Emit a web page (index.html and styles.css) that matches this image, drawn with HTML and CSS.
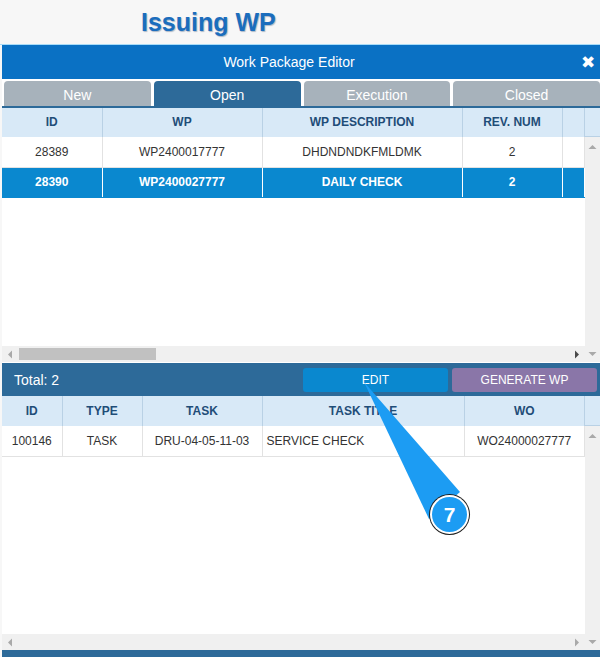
FILE: index.html
```html
<!DOCTYPE html>
<html>
<head>
<meta charset="utf-8">
<link rel="stylesheet" href="styles.css">
</head>
<body>
<div class="title-bar"><h1 class="title">Issuing WP</h1></div>
<div class="dialog">
  <div class="dlg-head"><span class="dlg-title">Work Package Editor</span><span class="close">✖</span></div>
  <div class="tabs">
    <div class="tab">New</div>
    <div class="tab active">Open</div>
    <div class="tab">Execution</div>
    <div class="tab">Closed</div>
  </div>

  <div class="grid">
    <div class="g-head">
      <table class="tbl">
        <colgroup><col class="c100"><col class="c160"><col class="c200"><col class="c100"><col></colgroup>
        <tr><th>ID</th><th>WP</th><th>WP DESCRIPTION</th><th>REV. NUM</th><th></th></tr>
      </table>
    </div>
    <div class="g-head-fill"></div>
    <div class="g-body">
      <table class="tbl">
        <colgroup><col class="c100"><col class="c160"><col class="c200"><col class="c100"><col></colgroup>
        <tr><td>28389</td><td>WP2400017777</td><td>DHDNDNDKFMLDMK</td><td>2</td><td></td></tr>
        <tr class="sel"><td>28390</td><td>WP2400027777</td><td>DAILY CHECK</td><td>2</td><td></td></tr>
      </table>
    </div>
    <div class="vscroll">
      <svg class="arr" width="9" height="6" viewBox="0 0 9 6"><path d="M0.5 5 L4.5 1 L8.5 5 Z" fill="#a9a9a9"/></svg>
      <svg class="arr" width="9" height="6" viewBox="0 0 9 6"><path d="M0.5 1 L4.5 5 L8.5 1 Z" fill="#a9a9a9"/></svg>
    </div>
    <div class="hscroll">
      <svg class="arr-l" width="6" height="9" viewBox="0 0 6 9"><path d="M5 0.5 L1 4.5 L5 8.5 Z" fill="#a9a9a9"/></svg>
      <div class="thumb"></div>
      <div class="spacer"></div>
      <svg class="arr-r" width="6" height="9" viewBox="0 0 6 9"><path d="M1 0.5 L5 4.5 L1 8.5 Z" fill="#4a4a4a"/></svg>
    </div>
  </div>

  <div class="total-bar">
    <span class="total">Total: 2</span>
    <div class="btn btn-edit">EDIT</div>
    <div class="btn btn-gen">GENERATE WP</div>
  </div>

  <div class="grid grid-bottom">
    <div class="g-head">
      <table class="tbl">
        <colgroup><col class="c60"><col class="c80"><col class="c120"><col class="c202"><col></colgroup>
        <tr><th>ID</th><th>TYPE</th><th>TASK</th><th>TASK TITLE</th><th>WO</th></tr>
      </table>
    </div>
    <div class="g-head-fill"></div>
    <div class="g-body">
      <table class="tbl">
        <colgroup><col class="c60"><col class="c80"><col class="c120"><col class="c202"><col></colgroup>
        <tr><td>100146</td><td>TASK</td><td>DRU-04-05-11-03</td><td class="left">SERVICE CHECK</td><td>WO24000027777</td></tr>
      </table>
    </div>
    <div class="vscroll">
      <svg class="arr" width="9" height="6" viewBox="0 0 9 6"><path d="M0.5 5 L4.5 1 L8.5 5 Z" fill="#a9a9a9"/></svg>
      <svg class="arr" width="9" height="6" viewBox="0 0 9 6"><path d="M0.5 1 L4.5 5 L8.5 1 Z" fill="#a9a9a9"/></svg>
    </div>
    <div class="hscroll">
      <svg class="arr-l" width="6" height="9" viewBox="0 0 6 9"><path d="M5 0.5 L1 4.5 L5 8.5 Z" fill="#a9a9a9"/></svg>
      <div class="spacer"></div>
      <svg class="arr-r" width="6" height="9" viewBox="0 0 6 9"><path d="M1 0.5 L5 4.5 L1 8.5 Z" fill="#a9a9a9"/></svg>
    </div>
  </div>
  <div class="footer-bar"></div>
</div>

<svg class="callout" width="600" height="657" viewBox="0 0 600 657">
  <polygon points="364,382 429,519 460,492" fill="#1c9cf3"/>
  <circle cx="449.5" cy="514.5" r="20.5" fill="#1e1e1e"/>
  <circle cx="449.5" cy="514.5" r="19.5" fill="#ffffff"/>
  <circle cx="449.5" cy="514.5" r="17.5" fill="#1c9cf3"/>
  <text x="449.5" y="522" text-anchor="middle" class="callout-num">7</text>
</svg>
</body>
</html>
```
FILE: styles.css
```css
* { box-sizing: border-box; }

body {
  margin: 0;
  width: 600px;
  height: 657px;
  overflow: hidden;
  position: relative;
  background: #f7f7f7;
  font-family: "Liberation Sans", Arial, sans-serif;
}

.title-bar {
  height: 45px;
  border-bottom: 1px solid #a9dcf8;
}

.title {
  margin: 0;
  padding-left: 141px;
  font-size: 25px;
  line-height: 44px;
  font-weight: bold;
  color: #1b6dbd;
  text-shadow: 1px 1px 1px rgba(0, 40, 90, 0.3);
}

.dialog {
  margin-left: 2px;
  background: #fff;
}

.dlg-head {
  height: 35px;
  background: #0a71c4;
  border-bottom: 1px solid #fff;
  display: flex;
  align-items: center;
  color: #fff;
}

.dlg-title {
  flex: 1;
  text-align: center;
  font-size: 14px;
}

.close {
  width: 24px;
  text-align: center;
  font-family: "DejaVu Sans", sans-serif;
  font-size: 17px;
  font-weight: bold;
  line-height: 1;
}

.tabs {
  height: 28px;
  display: flex;
  gap: 3px;
  padding: 1px 0 0 2px;
  border-bottom: 2px solid #2d6a99;
  background: #fff;
}

.tab {
  flex: 1;
  background: #a7b2bb;
  color: #fff;
  font-size: 14px;
  padding-top: 3px;
  line-height: 22px;
  text-align: center;
  border-radius: 4px 4px 0 0;
}

.tab.active { background: #2d6a99; }

.grid {
  display: grid;
  grid-template-columns: 583px 15px;
  grid-template-rows: 29px 1fr 16px;
  height: 254px;
}

.grid-bottom { grid-template-rows: 30px 1fr 16px; }

.g-head { grid-column: 1; grid-row: 1; }

.g-head-fill {
  grid-column: 2;
  grid-row: 1;
  background: #d8e9f7;
  border-bottom: 1px solid #b9d1e5;
}

.g-body {
  grid-column: 1;
  grid-row: 2;
  background: #fff;
  overflow: hidden;
}

.vscroll {
  grid-column: 2;
  grid-row: 2 / 4;
  background: #f0f0f0;
  display: flex;
  flex-direction: column;
  justify-content: space-between;
  align-items: center;
  padding: 7px 0 5px;
}

.hscroll {
  grid-column: 1;
  grid-row: 3;
  background: #f0f0f0;
  display: flex;
  align-items: center;
}

.arr-l { margin-left: 5px; }
.arr-r { margin-right: 5px; }

.thumb {
  margin-left: 6px;
  width: 137px;
  height: 12px;
  background: #c1c1c1;
}

.spacer { flex: 1; }

.tbl {
  width: 583px;
  border-collapse: collapse;
  table-layout: fixed;
}

.c60 { width: 60px; }
.c80 { width: 80px; }
.c100 { width: 100px; }
.c120 { width: 120px; }
.c160 { width: 160px; }
.c200 { width: 200px; }
.c202 { width: 202px; }

.tbl th {
  height: 29px;
  padding: 0;
  background: #d8e9f7;
  color: #1f4d78;
  font-size: 12px;
  font-weight: bold;
  border-right: 1px solid #b9d1e5;
  border-bottom: 1px solid #b9d1e5;
}

.grid-bottom .tbl th { height: 30px; }

.tbl td {
  height: 30px;
  padding: 0 4px;
  color: #333;
  font-size: 12px;
  text-align: center;
  white-space: nowrap;
  overflow: hidden;
  border-right: 1px solid #e2e2e2;
  border-bottom: 1px solid #e2e2e2;
}

.tbl td.left { text-align: left; }

.tbl tr.sel td {
  background: #0a88cf;
  color: #fff;
  font-weight: bold;
  border-right-color: rgba(255, 255, 255, 0.55);
  border-bottom-color: #0a88cf;
}

.total-bar {
  margin-top: 1px;
  height: 33px;
  background: #2d6a99;
  display: flex;
  align-items: center;
  padding: 0 3px 0 12px;
  color: #fff;
}

.total {
  flex: 1;
  font-size: 14px;
}

.btn {
  width: 145px;
  height: 24px;
  border-radius: 3px;
  display: flex;
  align-items: center;
  justify-content: center;
  font-size: 12px;
  color: #fff;
}

.btn-edit { background: #0a88cf; }
.btn-gen { background: #8a76a8; margin-left: 4px; }

.footer-bar {
  height: 10px;
  background: #2d6a99;
}

.callout {
  position: absolute;
  left: 0;
  top: 0;
  pointer-events: none;
}

.callout-num {
  fill: #fff;
  font-family: "Liberation Sans", Arial, sans-serif;
  font-size: 21px;
  font-weight: bold;
}
```
